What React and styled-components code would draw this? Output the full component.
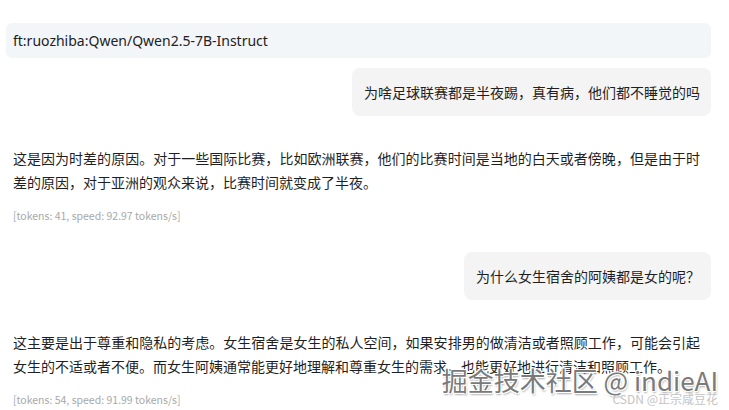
import React from 'react'
import styled, { createGlobalStyle } from 'styled-components'

const GlobalStyle = createGlobalStyle`
  html, body {
    margin: 0;
    padding: 0;
    background: #ffffff;
  }
  body {
    font-family: "Noto Sans CJK SC", "Noto Sans", sans-serif;
    color: #1f1f1f;
  }
`

const messages = [
  { role: 'user', text: '为啥足球联赛都是半夜踢，真有病，他们都不睡觉的吗' },
  {
    role: 'assistant',
    text: '这是因为时差的原因。对于一些国际比赛，比如欧洲联赛，他们的比赛时间是当地的白天或者傍晚，但是由于时差的原因，对于亚洲的观众来说，比赛时间就变成了半夜。',
    meta: '[tokens: 41, speed: 92.97 tokens/s]',
  },
  { role: 'user', text: '为什么女生宿舍的阿姨都是女的呢？' },
  {
    role: 'assistant',
    text: '这主要是出于尊重和隐私的考虑。女生宿舍是女生的私人空间，如果安排男的做清洁或者照顾工作，可能会引起女生的不适或者不便。而女生阿姨通常能更好地理解和尊重女生的需求，也能更好地进行清洁和照顾工作。',
    meta: '[tokens: 54, speed: 91.99 tokens/s]',
  },
]

const App = () => {
  return (
    <Page>
      <GlobalStyle />
      <ModelBar>ft:ruozhiba:Qwen/Qwen2.5-7B-Instruct</ModelBar>
      <Thread>
        {messages.map((m, i) =>
          m.role === 'user' ? (
            <UserRow key={i}>
              <Bubble>{m.text}</Bubble>
            </UserRow>
          ) : (
            <Answer key={i}>
              <AnswerText>{m.text}</AnswerText>
              <Meta>{m.meta}</Meta>
            </Answer>
          )
        )}
      </Thread>
      <Watermark>
        <Juejin>掘金技术社区 @ indieAI</Juejin>
        <Csdn>CSDN @正宗咸豆花</Csdn>
      </Watermark>
    </Page>
  )
}

const Page = styled.div`
  position: relative;
  width: 729px;
  height: 410px;
  overflow: hidden;
  box-sizing: border-box;
  padding: 23px 18px 0 6px;
`

const ModelBar = styled.div`
  height: 35px;
  display: flex;
  align-items: center;
  padding: 0 7px;
  background: #f3f6f9;
  border-radius: 6px;
  font-family: "Noto Sans", "Noto Sans CJK SC", sans-serif;
  font-size: 14px;
  color: #222;
`

const Thread = styled.div`
  display: flex;
  flex-direction: column;
`

const UserRow = styled.div`
  display: flex;
  justify-content: flex-end;
  margin-top: 10px;

  & + div {
    margin-top: 30px;
  }
`

const Bubble = styled.div`
  background: #f4f4f5;
  border-radius: 8px;
  padding: 13px 11px 13px 12px;
  font-size: 14px;
  line-height: 22px;
  color: #1f1f1f;
`

const Answer = styled.div`
  padding-left: 7px;

  & + ${UserRow} {
    margin-top: 28px;
  }
`

const AnswerText = styled.p`
  margin: 0;
  width: 687px;
  font-size: 14px;
  line-height: 24px;
  text-align: justify;
  color: #1f1f1f;
`

const Meta = styled.div`
  margin-top: 14px;
  font-size: 10.5px;
  line-height: 16px;
  color: #a8a8a8;
`

const Watermark = styled.div`
  position: absolute;
  right: 11px;
  bottom: 4px;
  display: flex;
  flex-direction: column;
  align-items: flex-end;
`

const Juejin = styled.div`
  font-size: 26px;
  line-height: 30px;
  color: #7a7a7a;
  text-shadow: 1px 1px 0 #ffffff, -1px -1px 0 #ffffff, 1px -1px 0 #ffffff, -1px 1px 0 #ffffff, 1px 2px 2px rgba(0, 0, 0, 0.35);
`

const Csdn = styled.div`
  margin-top: -3px;
  font-size: 12px;
  line-height: 14px;
  color: #c4c4c4;
`

export default App
